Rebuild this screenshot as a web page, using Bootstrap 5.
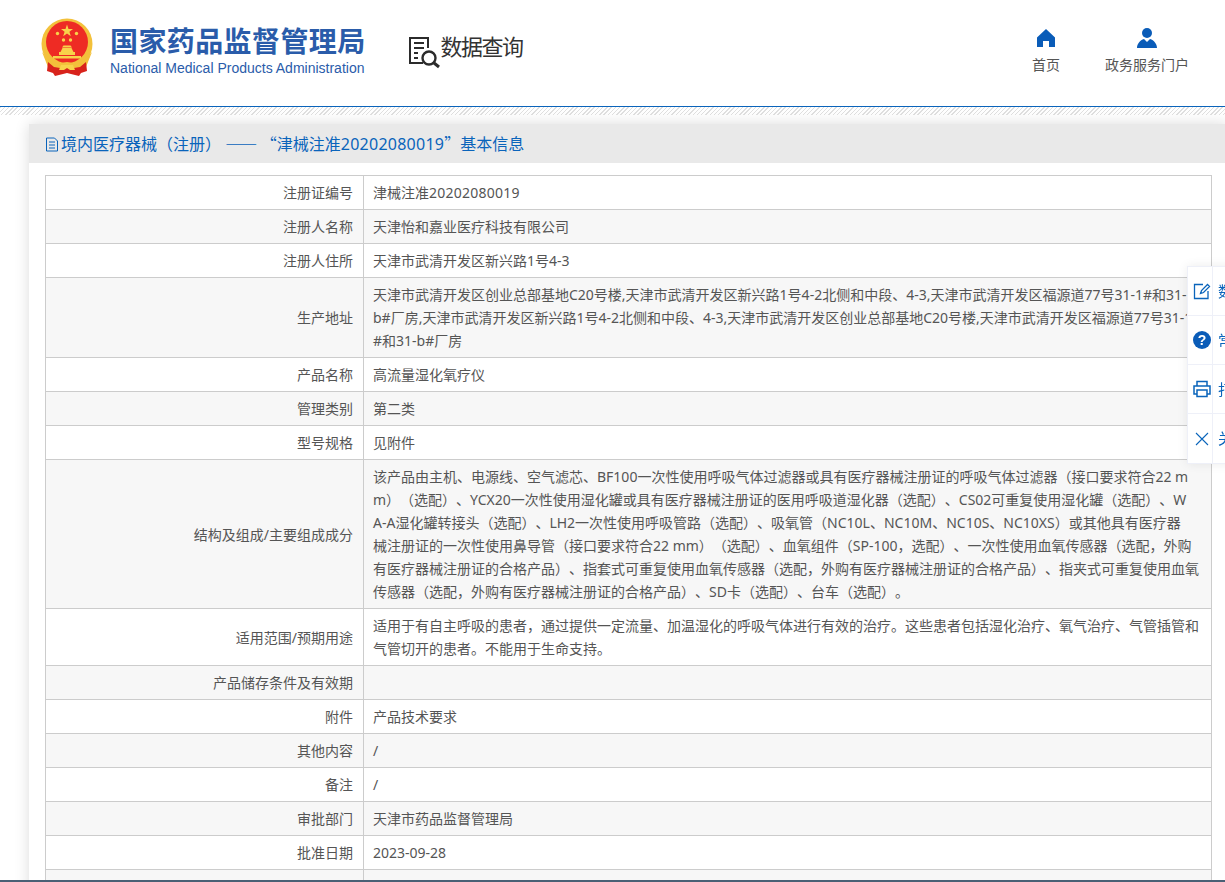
<!DOCTYPE html>
<html lang="zh-CN">
<head>
<meta charset="utf-8">
<title>数据查询</title>
<link href="https://cdn.jsdelivr.net/npm/bootstrap@5.3.0/dist/css/bootstrap.min.css" rel="stylesheet">
<style>
html,body{height:100%;overflow:hidden}
body{font-family:"Noto Sans","Noto Sans CJK SC","Liberation Sans",sans-serif;font-size:14px;color:#555;background:#fff;text-spacing-trim:space-all;text-autospace:no-autospace}
.topbar{height:106px;padding-left:40px;padding-right:36px}
.emblem{width:54px;height:60px;margin-top:18px;flex:none}
.brand{margin-left:16px;margin-top:22px;color:#2a5caa}
.brand-cn{font-family:"Noto Sans CJK SC",sans-serif;font-size:28px;font-weight:700;line-height:36px;letter-spacing:.4px;white-space:nowrap}
.brand-en{font-family:"Liberation Sans",sans-serif;font-size:14px;line-height:16px;margin-top:2px;white-space:nowrap}
.query{margin-left:42px;margin-top:33px;height:36px;color:#333;font-family:"Noto Sans CJK SC",sans-serif;font-size:22px;letter-spacing:-1.5px;line-height:30px}
.query svg{flex:none;margin-top:2px;margin-right:-1px}
.query span{margin-top:-3px}
.toplink{color:#555;font-size:14px;line-height:20px;text-decoration:none;text-align:center;margin-top:28px}
.toplink svg{display:block;margin:0 auto 7px}
.gap-links{gap:45px}
.hatch{height:9px;border-top:1px solid #0a64bb;background:repeating-linear-gradient(135deg,#e0e0e0 0 1px,#fff 1px 3px)}
.sheet{margin:9px -3px 0 29px;box-shadow:0 0 14px rgba(0,0,0,.14);background:#fff;height:900px}
.sheet-title{height:39px;background:#e9e9e9;color:#0a64bb;font-size:16px;line-height:39px;padding-left:16px;white-space:pre}
.sheet-title svg{vertical-align:-2px;margin-right:2px}
.cjk-run{font-family:"Noto Sans CJK SC",sans-serif}
.id-run{letter-spacing:.25px}
.sheet-body{padding:12px 16px 0}
.info-table{table-layout:fixed;width:1167px;border-collapse:collapse;margin:0;color:#555}
.info-table td{border:1px solid #ccc;padding:5px 10px 5px 9px;line-height:23px;vertical-align:middle;word-break:break-all;background:transparent}
.info-table tr:nth-child(even) td{background:#f7f7f7}
.info-table .lbl{width:318px;text-align:right}
.side-panel{position:fixed;left:1187px;top:266px;width:120px;background:#fff;border:1px solid #eef0f8;box-shadow:0 0 10px rgba(0,0,0,.08);color:#0a64bb;font-size:15px}
.side-row{height:49px;display:flex;align-items:center;border-bottom:1px solid #eef0f8}
.side-row:last-child{border-bottom:0}
.side-ic{width:25px;flex:none;height:100%;display:flex;align-items:center;justify-content:center;padding-left:3px;border-right:1px solid #eef0f8}
.side-tx{padding-left:5px;white-space:nowrap}
.bottom-rule{position:fixed;left:0;right:0;bottom:0;height:2px;background:#4a6075}
</style>
</head>
<body>
<header class="topbar d-flex justify-content-between">
  <div class="d-flex">
    <svg class="emblem" viewBox="0 0 54 60" aria-hidden="true">
      <circle cx="27" cy="26" r="25.500" fill="#f3c13b"/>
      <circle cx="27" cy="24" r="21" fill="#ee2b24"/>
      <path d="M2 34l6 15 8 4 11-4 11 4 8-4 6-15-7 8-6 4-12-2-12 2-6-4z" fill="#f3c13b"/>
      <path d="M8 44l-1 9 6 2 2 3 12-3 12 3 2-3 6-2-1-9-6 5-6 1-7-1-7 1-6-1z" fill="#d8231c"/>
      <path d="M21 47h12l2 5h-5l-3-2-3 2h-5z" fill="#f8d34a"/>
      <polygon points="27,6.500 28.500,11 33,11 29.400,13.800 30.800,18.300 27,15.600 23.200,18.300 24.600,13.800 21,11 25.500,11" fill="#f8d34a"/>
      <circle cx="17.500" cy="15.500" r="1.700" fill="#f8d34a"/><circle cx="36.500" cy="15.500" r="1.700" fill="#f8d34a"/><circle cx="23.500" cy="22" r="1.700" fill="#f8d34a"/><circle cx="30.500" cy="22" r="1.700" fill="#f8d34a"/>
      <path d="M19 37v-3h1.500l2-4h9l2 4H35v3zM22 29.500l1.500-2h7l1.500 2z" fill="#f8d34a"/>
      <path d="M13 38h28v2.500H13z" fill="#f8d34a"/>
    </svg>
    <div class="brand">
      <div class="brand-cn">国家药品监督管理局</div>
      <div class="brand-en">National Medical Products Administration</div>
    </div>
    <div class="query d-flex align-items-start">
      <svg width="34" height="34" viewBox="0 0 34 34" fill="none" stroke="#2b2b2b" stroke-width="2" aria-hidden="true">
        <path d="M15 28H2V3h18v10M6 8h10M6 13h10M6 18h4M6 23h4"/>
        <circle cx="21" cy="23" r="6.500" stroke-width="2.400"/>
        <path d="M26 28l5 4" stroke-width="3"/>
      </svg>
      <span>数据查询</span>
    </div>
  </div>
  <nav class="d-flex gap-links">
    <a class="toplink" href="#">
      <svg width="20" height="20" viewBox="0 0 20 20" fill="#0a5cb8" aria-hidden="true"><path d="M10 1L1 9.500V19h6v-6h6v6h6V9.500z"/></svg>
      首页
    </a>
    <a class="toplink" href="#">
      <svg width="20" height="20" viewBox="0 0 20 20" fill="#0a5cb8" aria-hidden="true"><circle cx="10" cy="5" r="5"/><path d="M0 20c0-4 3-8 7-9l3 3 3-3c4 1 7 5 7 9z"/></svg>
      政务服务门户
    </a>
  </nav>
</header>
<div class="hatch"></div>
<main class="sheet">
  <div class="sheet-title"><svg width="14" height="15" viewBox="0 0 14 15" fill="none" stroke="#0a64bb" aria-hidden="true"><path d="M1.500 1h8l3 3v10h-11zM4 5h6M4 8h6M4 11h6"/></svg>境内医疗器械（注册） <span class="cjk-run">—— “</span>津械注准<span class="id-run">20202080019</span><span class="cjk-run">”</span>基本信息</div>
  <div class="sheet-body">
    <table class="table info-table">
      <tbody>
        <tr><td class="lbl">注册证编号</td><td>津械注准<span class="id-run">20202080019</span></td></tr>
        <tr><td class="lbl">注册人名称</td><td>天津怡和嘉业医疗科技有限公司</td></tr>
        <tr><td class="lbl">注册人住所</td><td>天津市武清开发区新兴路1号4-3</td></tr>
        <tr><td class="lbl">生产地址</td><td>天津市武清开发区创业总部基地C20号楼,天津市武清开发区新兴路1号4-2北侧和中段、4-3,天津市武清开发区福源道77号31-1#和31-<br>b#厂房,天津市武清开发区新兴路1号4-2北侧和中段、4-3,天津市武清开发区创业总部基地C20号楼,天津市武清开发区福源道77号31-1<br>#和31-b#厂房</td></tr>
        <tr><td class="lbl">产品名称</td><td>高流量湿化氧疗仪</td></tr>
        <tr><td class="lbl">管理类别</td><td>第二类</td></tr>
        <tr><td class="lbl">型号规格</td><td>见附件</td></tr>
        <tr><td class="lbl">结构及组成/主要组成成分</td><td>该产品由主机、电源线、空气滤芯、BF100一次性使用呼吸气体过滤器或具有医疗器械注册证的呼吸气体过滤器（接口要求符合22 m<br>m）（选配）、YCX20一次性使用湿化罐或具有医疗器械注册证的医用呼吸道湿化器（选配）、CS02可重复使用湿化罐（选配）、W<br>A-A湿化罐转接头（选配）、LH2一次性使用呼吸管路（选配）、吸氧管（NC10L、NC10M、NC10S、NC10XS）或其他具有医疗器<br>械注册证的一次性使用鼻导管（接口要求符合22 mm）（选配）、血氧组件（SP-100，选配）、一次性使用血氧传感器（选配，外购<br>有医疗器械注册证的合格产品）、指套式可重复使用血氧传感器（选配，外购有医疗器械注册证的合格产品）、指夹式可重复使用血氧<br>传感器（选配，外购有医疗器械注册证的合格产品）、SD卡（选配）、台车（选配）。</td></tr>
        <tr><td class="lbl">适用范围/预期用途</td><td>适用于有自主呼吸的患者，通过提供一定流量、加温湿化的呼吸气体进行有效的治疗。这些患者包括湿化治疗、氧气治疗、气管插管和气管切开的患者。不能用于生命支持。</td></tr>
        <tr><td class="lbl">产品储存条件及有效期</td><td></td></tr>
        <tr><td class="lbl">附件</td><td>产品技术要求</td></tr>
        <tr><td class="lbl">其他内容</td><td>/</td></tr>
        <tr><td class="lbl">备注</td><td>/</td></tr>
        <tr><td class="lbl">审批部门</td><td>天津市药品监督管理局</td></tr>
        <tr><td class="lbl">批准日期</td><td>2023-09-28</td></tr>
        <tr><td class="lbl">&nbsp;</td><td></td></tr>
      </tbody>
    </table>
  </div>
</main>
<aside class="side-panel">
  <div class="side-row">
    <div class="side-ic"><svg width="18" height="17" viewBox="0 0 18 17" fill="none" stroke="#0a64bb" stroke-width="1.300" aria-hidden="true"><path d="M10 1.500H1.500v14H15V8M7.500 10.500l1-3 6-6 2 2-6 6z"/></svg></div>
    <div class="side-tx">数据查询</div>
  </div>
  <div class="side-row">
    <div class="side-ic"><svg width="18" height="18" viewBox="0 0 18 18" aria-hidden="true"><circle cx="9" cy="9" r="9" fill="#0a5cb8"/><text x="9" y="14" text-anchor="middle" font-size="14" font-weight="700" fill="#fff" font-family="Liberation Sans">?</text></svg></div>
    <div class="side-tx">常见问题</div>
  </div>
  <div class="side-row">
    <div class="side-ic"><svg width="18" height="18" viewBox="0 0 18 18" fill="none" stroke="#0a64bb" stroke-width="1.500" aria-hidden="true"><path d="M4 6V1.500h10V6M4 14H1V6h16v8h-3M4 10h10v6.500H4z"/></svg></div>
    <div class="side-tx">打印</div>
  </div>
  <div class="side-row">
    <div class="side-ic"><svg width="14" height="14" viewBox="0 0 14 14" fill="none" stroke="#0a64bb" stroke-width="1.100" aria-hidden="true"><path d="M1 1l12 12M13 1L1 13"/></svg></div>
    <div class="side-tx">关闭</div>
  </div>
</aside>
<div class="bottom-rule"></div>
<script src="https://cdn.jsdelivr.net/npm/bootstrap@5.3.0/dist/js/bootstrap.bundle.min.js"></script>
</body>
</html>
